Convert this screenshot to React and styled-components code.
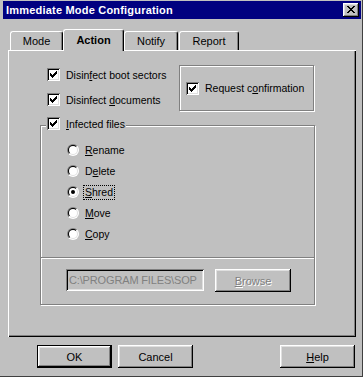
import React from 'react';
import styled, { createGlobalStyle, css } from 'styled-components';

const GlobalStyle = createGlobalStyle`
  html, body {
    margin: 0;
    padding: 0;
    background: #c0c0c0;
  }
  body {
    font-family: "Liberation Sans", Arial, sans-serif;
    font-size: 10.5px;
    color: #000;
  }
  * { box-sizing: border-box; }
`;

// classic 3D edges
const raised = css`
  box-shadow: inset -1px -1px #000, inset 1px 1px #fff,
    inset -2px -2px #808080, inset 2px 2px #dfdfdf;
`;

const sunken = css`
  box-shadow: inset 1px 1px #808080, inset -1px -1px #fff,
    inset 2px 2px #000, inset -2px -2px #dfdfdf;
`;

const Window = styled.div`
  width: 363px;
  height: 377px;
  background: #c0c0c0;
  padding: 1px 1px 0 3px;
  border-right: 1px solid #404040;
  border-bottom: 1px solid #404040;
  display: flex;
  flex-direction: column;
`;

const TitleBar = styled.div`
  height: 18px;
  background: #000080;
  color: #fff;
  font-weight: bold;
  font-size: 11px;
  letter-spacing: 0.2px;
  display: flex;
  align-items: center;
  justify-content: space-between;
  padding: 0 2px 0 3px;
`;

const CloseButton = styled.div`
  width: 16px;
  height: 14px;
  background: #c0c0c0;
  ${raised};
  display: flex;
  align-items: center;
  justify-content: center;
  padding-bottom: 1px;
`;

const Body = styled.div`
  padding: 0 5px 0 5px;
  display: flex;
  flex-direction: column;
`;

const TabRow = styled.div`
  margin-top: 10px;
  height: 21px;
  padding-left: 2px;
  display: flex;
  align-items: flex-end;
`;

const Tab = styled.div`
  position: relative;
  z-index: ${p => (p.$active ? 2 : 0)};
  width: ${p => p.$w}px;
  height: ${p => (p.$active ? 22 : 19)}px;
  margin-right: ${p => p.$gap || 0}px;
  margin-bottom: ${p => (p.$active ? -1 : 0)}px;
  background: #c0c0c0;
  border-top: 1px solid #fff;
  border-left: 1px solid #fff;
  border-right: 1px solid #000;
  border-radius: 3px 3px 0 0;
  box-shadow: inset -1px 0 #808080;
  font-weight: ${p => (p.$active ? 'bold' : 'normal')};
  display: flex;
  justify-content: center;
  padding-top: ${p => (p.$active ? 4 : 3)}px;
  font-size: 11px;
`;

const Panel = styled.div`
  position: relative;
  z-index: 1;
  height: 287px;
  box-shadow: inset 1px 1px #fff, inset -1px -1px #000, inset -2px -2px #808080;
  padding: 15px 0 0 32px;
`;

const TopRow = styled.div`
  display: flex;
  height: 46px;
`;

const CheckColumn = styled.div`
  width: 139px;
  padding: 3px 0 0 7px;
  display: flex;
  flex-direction: column;
  gap: 12px;
`;

const Etched = css`
  border: 1px solid #808080;
  box-shadow: inset 1px 1px #fff, 1px 1px #fff;
`;

const PlainGroup = styled.div`
  ${Etched};
  width: 135px;
  height: 46px;
  display: flex;
  align-items: center;
  padding-left: 6px;
`;

const Group = styled.div`
  ${Etched};
  width: 275px;
  height: 180px;
  margin-top: 14px;
  display: flex;
  flex-direction: column;
`;

const GroupLabel = styled.div`
  align-self: flex-start;
  margin: -9px 0 0 5px;
  padding: 0 1px;
  background: #c0c0c0;
`;

const CheckRow = styled.div`
  display: flex;
  align-items: center;
  height: 13px;
  gap: 6px;
  white-space: nowrap;
`;

const Box = styled.div`
  width: 13px;
  height: 13px;
  background: #fff;
  ${sunken};
  display: flex;
  align-items: center;
  justify-content: center;
  flex: none;
`;

const RadioList = styled.div`
  margin: 12px 0 0 26px;
  display: flex;
  flex-direction: column;
  gap: 5px;
`;

const RadioRow = styled.div`
  display: flex;
  align-items: center;
  height: 16px;
  gap: 4px;
`;

const RadioOuter = styled.div`
  width: 12px;
  height: 12px;
  border-radius: 50%;
  background: linear-gradient(135deg, #808080 50%, #fff 50%);
  padding: 1px;
  flex: none;
`;

const RadioInner = styled.div`
  width: 10px;
  height: 10px;
  border-radius: 50%;
  background: linear-gradient(135deg, #000 50%, #dfdfdf 50%);
  padding: 1px;
`;

const RadioFace = styled.div`
  width: 8px;
  height: 8px;
  border-radius: 50%;
  background: #fff;
  display: flex;
  align-items: center;
  justify-content: center;
`;

const Dot = styled.div`
  width: 4px;
  height: 4px;
  border-radius: 50%;
  background: #000;
`;

const RadioText = styled.span`
  padding: 0 1px;
  line-height: 13px;
  border: 1px dotted ${p => (p.$focus ? '#000' : 'transparent')};
`;

const Separator = styled.div`
  margin-top: 15px;
  border-top: 1px solid #808080;
  border-bottom: 1px solid #fff;
`;

const PathRow = styled.div`
  margin: 10px 0 0 25px;
  display: flex;
  align-items: flex-start;
  gap: 11px;
`;

const PathField = styled.div`
  width: 138px;
  height: 22px;
  ${sunken};
  background: #c0c0c0;
  color: #808080;
  font-size: 11px;
  letter-spacing: -0.15px;
  padding: 0 2px 0 3px;
  display: flex;
  align-items: center;
  white-space: nowrap;
  overflow: hidden;
`;

const Button = styled.div`
  width: ${p => p.$w || 75}px;
  height: 23px;
  background: #c0c0c0;
  display: flex;
  align-items: center;
  justify-content: center;
  font-size: 11px;
  color: ${p => (p.$disabled ? '#808080' : '#000')};
  text-shadow: ${p => (p.$disabled ? '1px 1px #fff' : 'none')};
  ${p =>
    p.$default
      ? css`
          border: 1px solid #000;
          box-shadow: inset -1px -1px #000, inset 1px 1px #fff,
            inset -2px -2px #808080, inset 2px 2px #dfdfdf;
        `
      : raised};
`;

const Footer = styled.div`
  margin-top: 8px;
  padding: 0 1px 0 29px;
  display: flex;
  gap: 6px;
`;

const Spacer = styled.div`
  flex: 1;
`;

const Key = styled.span`
  text-decoration: underline;
`;

function pixelPath(rows) {
  let d = '';
  rows.forEach((row, y) => {
    [...row].forEach((c, x) => {
      if (c === 'x') d += `M${x} ${y}h1v1h-1z`;
    });
  });
  return d;
}

const checkPath = pixelPath([
  '......x',
  '.....xx',
  'x...xxx',
  'xx.xxx.',
  'xxxxx..',
  '.xxx...',
  '..x....',
]);

const closePath = pixelPath([
  'xx....xx',
  '.xx..xx.',
  '..xxxx..',
  '...xx...',
  '..xxxx..',
  '.xx..xx.',
  'xx....xx',
]);

function Check({ children }) {
  return (
    <CheckRow>
      <Box>
        <svg width="7" height="7" viewBox="0 0 7 7" shapeRendering="crispEdges">
          <path d={checkPath} fill="#000" />
        </svg>
      </Box>
      <span>{children}</span>
    </CheckRow>
  );
}

function Radio({ checked, focus, children }) {
  return (
    <RadioRow>
      <RadioOuter>
        <RadioInner>
          <RadioFace>{checked && <Dot />}</RadioFace>
        </RadioInner>
      </RadioOuter>
      <RadioText $focus={focus}>{children}</RadioText>
    </RadioRow>
  );
}

export default function App() {
  return (
    <>
      <GlobalStyle />
      <Window>
        <TitleBar>
          <span>Immediate Mode Configuration</span>
          <CloseButton>
            <svg width="8" height="7" viewBox="0 0 8 7" shapeRendering="crispEdges">
              <path d={closePath} fill="#000" />
            </svg>
          </CloseButton>
        </TitleBar>
        <Body>
          <TabRow>
            <Tab $w={53}>Mode</Tab>
            <Tab $w={61} $active>Action</Tab>
            <Tab $w={54} $gap={1}>Notify</Tab>
            <Tab $w={60}>Report</Tab>
          </TabRow>
          <Panel>
            <TopRow>
              <CheckColumn>
                <Check>Disin<Key>f</Key>ect boot sectors</Check>
                <Check>Disinfect <Key>d</Key>ocuments</Check>
              </CheckColumn>
              <PlainGroup>
                <Check>Request c<Key>o</Key>nfirmation</Check>
              </PlainGroup>
            </TopRow>
            <Group>
              <GroupLabel>
                <Check><Key>I</Key>nfected files</Check>
              </GroupLabel>
              <RadioList>
                <Radio><Key>R</Key>ename</Radio>
                <Radio>D<Key>e</Key>lete</Radio>
                <Radio checked focus><Key>S</Key>hred</Radio>
                <Radio><Key>M</Key>ove</Radio>
                <Radio><Key>C</Key>opy</Radio>
              </RadioList>
              <Separator />
              <PathRow>
                <PathField>C:\PROGRAM FILES\SOP</PathField>
                <Button $w={76} $disabled><Key>B</Key>rowse</Button>
              </PathRow>
            </Group>
          </Panel>
          <Footer>
            <Button $default>OK</Button>
            <Button>Cancel</Button>
            <Spacer />
            <Button><Key>H</Key>elp</Button>
          </Footer>
        </Body>
      </Window>
    </>
  );
}
